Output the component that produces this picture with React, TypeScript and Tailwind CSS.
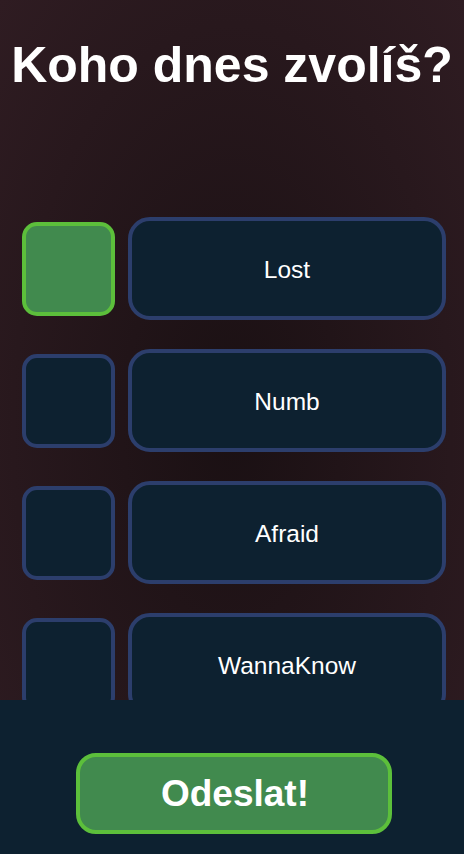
import { useState } from "react";

const options = ["Lost", "Numb", "Afraid", "WannaKnow"];

export default function App() {
  const [selected, setSelected] = useState(0);

  return (
    <div
      className="flex h-[854px] w-full flex-col overflow-hidden bg-[radial-gradient(ellipse_at_center,#1a1013_0%,#2f1c22_100%)] text-white"
      style={{ fontFamily: '"Liberation Sans", Arial, sans-serif' }}
    >
      <h1 className="mt-[40px] text-center text-[50px] font-bold leading-[50px]">Koho dnes zvolíš?</h1>

      <div className="mt-[127px] flex min-h-0 flex-1 flex-col gap-[29px] overflow-hidden pl-[22px] pr-[18px]">
        {options.map((name, i) => (
          <div key={name} className="flex shrink-0 items-center gap-[13px]">
            <button
              onClick={() => setSelected(i)}
              className={
                i === selected
                  ? "h-[94px] w-[93px] shrink-0 rounded-[15px] border-4 border-[#5cbf3b] bg-[#418a4e]"
                  : "h-[94px] w-[93px] shrink-0 rounded-[15px] border-4 border-[#2c3e6c] bg-[#0d2130]"
              }
            />
            <div className="flex h-[103px] flex-1 items-center justify-center rounded-[22px] border-4 border-[#2c3e6c] bg-[#0d2130] pt-[3px] text-[24.5px]">
              {name}
            </div>
          </div>
        ))}
      </div>

      <div className="flex h-[154px] shrink-0 items-start justify-center bg-[#0d2130] pl-[4px] pt-[53px]">
        <button className="flex h-[81px] w-[316px] items-center justify-center rounded-[20px] border-4 border-[#5cbf3b] bg-[#418a4e] pl-[2px] text-[37px] font-bold">
          Odeslat!
        </button>
      </div>
    </div>
  );
}
